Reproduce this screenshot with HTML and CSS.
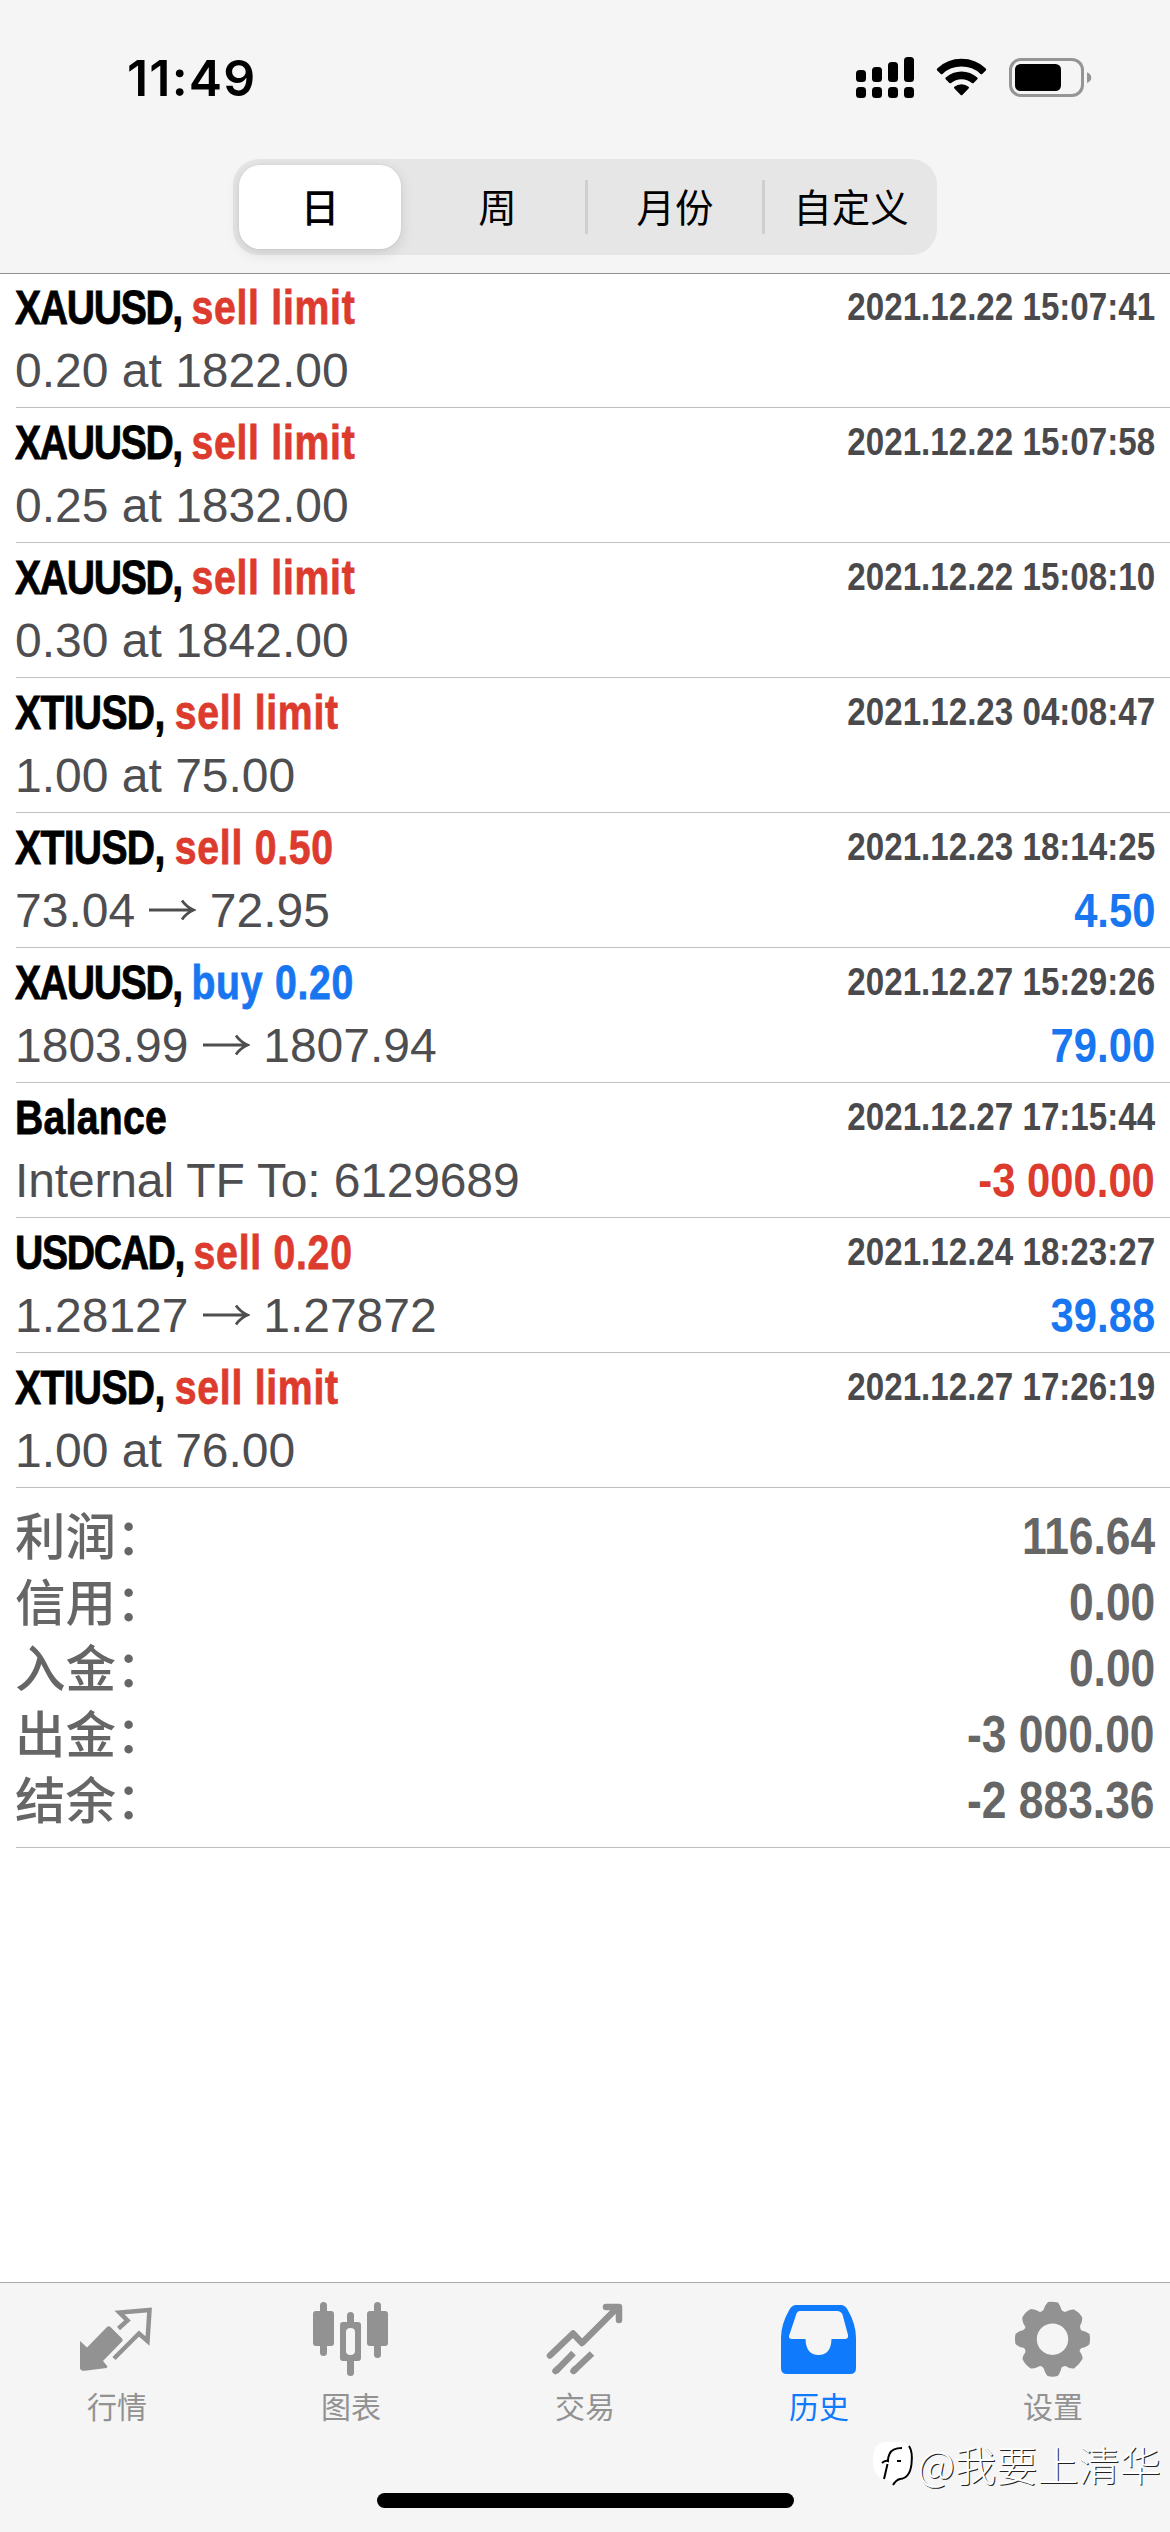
FILE: index.html
```html
<!DOCTYPE html>
<html lang="zh-CN">
<head>
<meta charset="utf-8">
<meta name="viewport" content="width=device-width">
<title>历史</title>
<link rel="stylesheet" href="styles.css">
</head>
<body>
<div class="screen">
  <header class="header">
    <div class="status">
      <span class="clock">11:49</span>
      <svg class="status-icons" width="240" height="48" viewBox="0 0 240 48" aria-hidden="true">
        <g>
          <rect x="4" y="18" width="10" height="12" rx="3.5"/><rect x="20" y="15" width="10" height="15" rx="3.5"/><rect x="36" y="10" width="10" height="20" rx="3.5"/><rect x="52" y="5" width="10" height="25" rx="3.5"/>
          <rect x="4" y="35" width="10" height="11" rx="3.5"/><rect x="20" y="35" width="10" height="11" rx="3.5"/><rect x="36" y="35" width="10" height="11" rx="3.5"/><rect x="52" y="35" width="10" height="11" rx="3.5"/>
        </g>
        <g>
          <path d="M85.2 16.4Q84.3 17.4 85.2 18.4L88.8 22Q89.6 22.7 90.5 21.9Q98.500 14.600 109.500 14.600Q120.500 14.600 128.500 21.900Q129.400 22.700 130.200 22L133.800 18.400Q134.700 17.400 133.800 16.400Q123.500 6.800 109.500 6.800Q95.500 6.800 85.200 16.400Z"/>
          <path d="M93.700 25.600Q92.900 26.500 93.700 27.300L97.400 31Q98.200 31.700 99.100 31Q103.500 27.200 109.500 27.200Q115.500 27.200 119.900 31Q120.800 31.700 121.600 31L125.300 27.300Q126.100 26.500 125.300 25.600Q118.500 19.500 109.500 19.500Q100.500 19.500 93.700 25.600Z"/>
          <path d="M102.400 34.700Q101.500 35.500 102.400 36.400L108.700 42.900Q109.500 43.700 110.300 42.900L116.600 36.400Q117.500 35.500 116.600 34.700Q113.500 32.200 109.500 32.200Q105.500 32.200 102.400 34.700Z"/>
        </g>
        <rect class="battery-case" x="158.500" y="7.500" width="72" height="36" rx="10.500"/>
        <rect x="163" y="12" width="46" height="27" rx="5.500"/>
        <path class="battery-tip" d="M235 20.300Q239.300 22 239.300 25.700Q239.300 29.300 235 31Z"/>
      </svg>
    </div>
    <nav class="segments">
      <span class="segment selected">日</span>
      <span class="segment">周</span>
      <span class="segment divided">月份</span>
      <span class="segment divided">自定义</span>
    </nav>
  </header>

  <main class="content">
    <ul class="deals">
      <li class="deal">
        <div class="top"><p class="title"><span class="symbol">XAUUSD, </span><span class="action sell">sell limit</span></p><time class="date">2021.12.22 15:07:41</time></div>
        <div class="bottom"><p class="detail">0.20 at 1822.00</p></div>
      </li>
      <li class="deal">
        <div class="top"><p class="title"><span class="symbol">XAUUSD, </span><span class="action sell">sell limit</span></p><time class="date">2021.12.22 15:07:58</time></div>
        <div class="bottom"><p class="detail">0.25 at 1832.00</p></div>
      </li>
      <li class="deal">
        <div class="top"><p class="title"><span class="symbol">XAUUSD, </span><span class="action sell">sell limit</span></p><time class="date">2021.12.22 15:08:10</time></div>
        <div class="bottom"><p class="detail">0.30 at 1842.00</p></div>
      </li>
      <li class="deal">
        <div class="top"><p class="title"><span class="symbol oil">XTIUSD, </span><span class="action sell">sell limit</span></p><time class="date">2021.12.23 04:08:47</time></div>
        <div class="bottom"><p class="detail">1.00 at 75.00</p></div>
      </li>
      <li class="deal">
        <div class="top"><p class="title"><span class="symbol oil">XTIUSD, </span><span class="action sell">sell 0.50</span></p><time class="date">2021.12.23 18:14:25</time></div>
        <div class="bottom"><p class="detail">73.04 <svg class="arrow" viewBox="0 0 48 24"><path d="M1 12H45M34 2.500Q38 8.500 45.500 12Q38 15.500 34 21.500"/></svg> 72.95</p><span class="profit buy">4.50</span></div>
      </li>
      <li class="deal">
        <div class="top"><p class="title"><span class="symbol">XAUUSD, </span><span class="action buy">buy 0.20</span></p><time class="date">2021.12.27 15:29:26</time></div>
        <div class="bottom"><p class="detail">1803.99 <svg class="arrow" viewBox="0 0 48 24"><path d="M1 12H45M34 2.500Q38 8.500 45.500 12Q38 15.500 34 21.500"/></svg> 1807.94</p><span class="profit buy">79.00</span></div>
      </li>
      <li class="deal">
        <div class="top"><p class="title"><span class="balance">Balance</span></p><time class="date">2021.12.27 17:15:44</time></div>
        <div class="bottom"><p class="detail note">Internal TF To: 6129689</p><span class="profit sell">-3 000.00</span></div>
      </li>
      <li class="deal">
        <div class="top"><p class="title"><span class="symbol">USDCAD, </span><span class="action sell">sell 0.20</span></p><time class="date">2021.12.24 18:23:27</time></div>
        <div class="bottom"><p class="detail">1.28127 <svg class="arrow" viewBox="0 0 48 24"><path d="M1 12H45M34 2.500Q38 8.500 45.500 12Q38 15.500 34 21.500"/></svg> 1.27872</p><span class="profit buy">39.88</span></div>
      </li>
      <li class="deal">
        <div class="top"><p class="title"><span class="symbol oil">XTIUSD, </span><span class="action sell">sell limit</span></p><time class="date">2021.12.27 17:26:19</time></div>
        <div class="bottom"><p class="detail">1.00 at 76.00</p></div>
      </li>
    </ul>
    <dl class="summary">
      <div class="total"><dt>利润：</dt><dd>116.64</dd></div>
      <div class="total"><dt>信用：</dt><dd>0.00</dd></div>
      <div class="total"><dt>入金：</dt><dd>0.00</dd></div>
      <div class="total"><dt>出金：</dt><dd>-3 000.00</dd></div>
      <div class="total"><dt>结余：</dt><dd>-2 883.36</dd></div>
    </dl>
  </main>

  <footer class="footer">
    <nav class="tabs">
      <a class="tab">
        <svg class="tab-icon" viewBox="0 0 78 78"><path d="M2 42L9 48.500L28.500 28.500Q30.500 26.500 32.500 28L44 39.500Q45.500 41 44 42.500L25 62L29.500 67.500L28.500 69L7 71.800Q2 72 2 69Z" fill="currentColor"/><path class="line" d="M40.500 29.500L49.500 21.500L41.500 13.500L71.500 11L69.500 42L61 34.500L36 59.500"/></svg>
        <span>行情</span>
      </a>
      <a class="tab">
        <svg class="tab-icon" viewBox="0 0 78 78" fill="currentColor"><rect x="8" y="3" width="7" height="54" rx="3.500"/><rect x="1" y="12" width="21" height="35" rx="3"/><rect x="62" y="3" width="7" height="56" rx="3.500"/><rect x="55" y="12" width="21" height="35" rx="3"/><rect x="35" y="13" width="7" height="14" rx="3.500"/><rect x="35" y="59" width="7" height="18" rx="3.500"/><path fill-rule="evenodd" d="M31 23H46Q49 23 49 26V59Q49 62 46 62H31Q28 62 28 59V26Q28 23 31 23ZM38.500 29Q34 29 34 33V52Q34 56 38.500 56Q43 56 43 52V33Q43 29 38.500 29Z"/></svg>
        <span>图表</span>
      </a>
      <a class="tab">
        <svg class="tab-icon" viewBox="0 0 78 78"><g class="stroke"><path d="M4 56.500L27 34.500L36 44L71 9M60 8H73V21"/><path d="M10 72L27.500 54M27.500 72L46 54.500" stroke-linecap="butt"/><path d="M9.500 72L11 70.500M27.500 72L29 70.500"/></g></svg>
        <span>交易</span>
      </a>
      <a class="tab active">
        <svg class="tab-icon" viewBox="0 0 78 78" fill="currentColor"><path fill-rule="evenodd" d="M16 6H61Q65 6 67.500 10.500Q76 25 76 39V69Q76 75 70 75H7Q1 75 1 69V39Q1 25 9.500 10.500Q12 6 16 6ZM20 12H57Q61 12 62.500 15.500L68 36Q68.500 40 65 40H51.500Q51 56 38.500 56Q26 56 25.500 40H12Q8.500 40 9 37L16 16Q17 12 20 12Z"/></svg>
        <span>历史</span>
      </a>
      <a class="tab">
        <svg class="tab-icon" viewBox="0 0 78 78"><path fill="currentColor" fill-rule="evenodd" d="M34 3Q38.500 2.500 44 3.500Q46 6 47.500 11Q49 12.500 51 13Q56 10 60 10.500Q65 13 68 18Q69 22 66 27Q66 30 67.500 31.500Q72 32 75.500 35Q76.500 40 75.500 45Q73 48 67.500 49Q66 50 65.500 52Q69 57 68.500 60Q65 66 60 69.500Q56 70 51.500 67Q49 67 47.500 68.500Q46 75 43.500 77Q38.500 78.500 33.500 77Q31 74 29.500 69Q28 67 26 67Q20 70 17 69.500Q11 66 8.500 60Q8.500 57 11.500 53Q11.500 50 10 49Q4 48 1.500 45Q.5 40 1.500 35Q5 32 9.500 31Q11 30 11.500 28Q7.500 22 8.500 18Q12 12 17 10Q21 10 26 13Q28 12.500 29.500 11Q31 6 34 3ZM38.500 24.500A15.700 15.700 0 1 0 38.500 55.900A15.700 15.700 0 1 0 38.500 24.500Z"/></svg>
        <span>设置</span>
      </a>
    </nav>
    <div class="home-bar"></div>
  </footer>
  <div class="watermark">
    <svg width="44" height="50" viewBox="0 0 44 50"><path class="blob" d="M14 4H28Q41 4 41 20Q41 40 29 42L22 47L19 43Q1 42 1 23Q1 4 14 4Z"/><path class="mark" d="M37 8Q41 14 39.500 26Q38 40 28 41Q24 42 21 47M30 10Q20 10 17.500 16Q16 19 16 23Q13 22 10 25M15.500 26Q13 37 12 41M25 23H29"/></svg>
    <span>@我要上清华</span>
  </div>
</div>
</body>
</html>
```
FILE: styles.css
```css
* { box-sizing: border-box; margin: 0; padding: 0; }

body {
  width: 1170px;
  height: 2532px;
  background: #fff;
  font-family: "Liberation Sans", "Noto Sans CJK SC", sans-serif;
}

.screen {
  position: relative;
  display: flex;
  flex-direction: column;
  height: 2532px;
  overflow: hidden;
}

.header {
  display: flex;
  flex-direction: column;
  align-items: center;
  height: 274px;
  background: #f5f5f5;
  border-bottom: 1px solid #8e8e90;
}

.status {
  display: flex;
  justify-content: space-between;
  align-items: flex-start;
  width: 100%;
  height: 159px;
  padding: 52px 78px 0 127px;
}

.clock {
  font: 600 50px/52px Inter, sans-serif;
  letter-spacing: 1.200px;
}

.battery-case { fill: none; stroke: #959597; stroke-width: 3; }
.battery-tip { fill: #959597; }

.segments {
  display: grid;
  grid-template-columns: 174px 178px 177px 175px;
  width: 704px;
  height: 96px;
  padding: 6px 0;
  border-radius: 26px;
  background: #e6e6e7;
  font: 400 38.500px/82px "Noto Sans CJK SC", sans-serif;
}

.segment {
  display: flex;
  justify-content: center;
  align-items: center;
  height: 84px;
  padding: 0 0 5px 3px;
}

.segment.selected {
  margin: 0 6px;
  padding-left: 0;
  border-radius: 21px;
  background: #fff;
  box-shadow: 0 4px 14px rgba(0, 0, 0, .12), 0 0 2px rgba(0, 0, 0, .1);
  font-weight: 500;
}

.segment.divided {
  background: linear-gradient(#cfcfd1, #cfcfd1) 0 50% / 3px 54px no-repeat;
}

.content { flex: 1; }
.deals { list-style: none; }

.deal {
  display: flex;
  flex-direction: column;
  justify-content: flex-end;
  height: 135px;
  margin-left: 16px;
  padding: 0 15px 7px 0;
  border-bottom: 1px solid #c0c0c2;
}

.deal:first-child { height: 134px; }

.top, .bottom {
  display: flex;
  justify-content: space-between;
  align-items: flex-start;
  white-space: pre;
}

.top { height: 68px; }
.bottom { height: 59px; }

.title {
  margin-left: -1px;
  font-size: 49px;
  font-weight: 700;
  line-height: 68px;
  transform: scaleX(.8);
  transform-origin: left;
  -webkit-text-stroke: .8px currentColor;
}

.symbol { letter-spacing: -1.700px; }
.symbol.oil { letter-spacing: -.9px; }
.action { letter-spacing: .9px; }
.balance { letter-spacing: .3px; }
.sell { color: #dc3b2e; }
.buy { color: #1877f0; }

.date {
  color: #4a4a4d;
  font-size: 39px;
  font-weight: 700;
  line-height: 67px;
  transform: scaleX(.85);
  transform-origin: right;
}

.detail {
  margin-left: -1px;
  color: #4e4e51;
  font-size: 48px;
  line-height: 59px;
}

.detail.note { letter-spacing: -.15px; }

.arrow {
  width: 48px;
  height: 24px;
  vertical-align: 5px;
  fill: none;
  stroke: currentColor;
  stroke-width: 2.800;
}

.profit {
  font-size: 48px;
  font-weight: 700;
  line-height: 59px;
  transform: scaleX(.87);
  transform-origin: right;
}

.summary {
  height: 360px;
  margin-left: 16px;
  padding: 14px 15px 0 0;
  border-bottom: 1px solid #c0c0c2;
  color: #666;
}

.total {
  display: flex;
  justify-content: space-between;
  height: 66px;
}

.total dt {
  margin-left: -1px;
  padding-top: 3px;
  font-size: 50.500px;
  font-weight: 500;
  line-height: 66px;
}

.total dd {
  font-size: 51px;
  font-weight: 700;
  line-height: 70px;
  transform: scaleX(.87);
  transform-origin: right;
}

.footer {
  display: flex;
  flex-direction: column;
  align-items: center;
  height: 250px;
  border-top: 1px solid #a9a9ac;
  background: #f5f5f5;
}

.tabs {
  display: grid;
  grid-template-columns: repeat(5, 1fr);
  width: 100%;
  height: 210px;
  color: #929292;
}

.tab {
  display: flex;
  flex-direction: column;
  align-items: center;
  padding-top: 16px;
  font: 400 30px/44px "Noto Sans CJK SC", sans-serif;
}

.tab.active { color: #0f7afc; }
.tab-icon { width: 78px; height: 78px; margin-bottom: 6px; }
.line { fill: none; stroke: currentColor; stroke-width: 4.500; }
.stroke { fill: none; stroke: currentColor; stroke-width: 6.500; stroke-linecap: round; stroke-linejoin: round; }

.home-bar {
  width: 417px;
  height: 15px;
  border-radius: 8px;
  background: #000;
}

.watermark {
  position: absolute;
  right: 9px;
  bottom: 39px;
  display: flex;
  align-items: center;
  color: #fff;
  font: 300 41.200px/60px "Noto Sans CJK SC", sans-serif;
  text-shadow: 1px 1px 0 #222;
}

.watermark svg { margin-right: 2px; }
.blob { fill: #fff; }
.mark { fill: none; stroke: #000; stroke-width: 2; }
```
